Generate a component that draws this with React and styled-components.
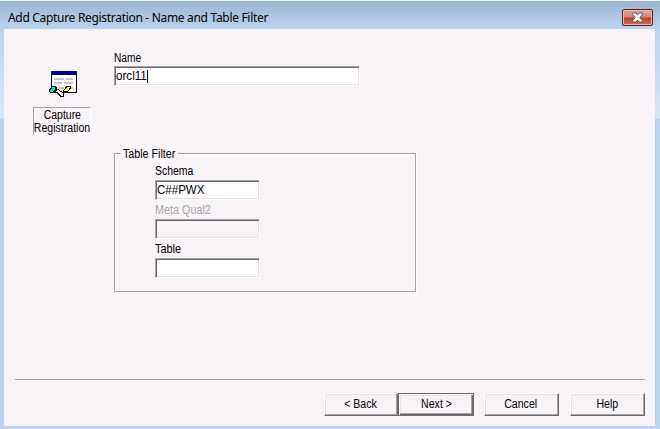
import React from "react";
import styled, { createGlobalStyle } from "styled-components";

const Global = createGlobalStyle`
  * { box-sizing: border-box; }
  body { margin: 0; overflow: hidden; }
`;

const Window = styled.div`
  width: 660px;
  height: 429px;
  display: flex;
  flex-direction: column;
  padding: 0 5px 3px 4px;
  border-top: 1px solid #f3f5f8;
  background:
    linear-gradient(#99b4d1, #bcd3ef 28px, #d9e6f5 117px, #bcd3ef 118px);
  font: 12px/13px "Liberation Sans", Arial, sans-serif;
  color: #000;
`;

const TitleBar = styled.header`
  height: 28px;
  flex: none;
  display: flex;
  justify-content: space-between;
  padding: 8px 2px 0 4px;
`;

const Title = styled.h1`
  margin: 1px 0 0;
  font: 12px/16px "Noto Sans", "Segoe UI", sans-serif;
  letter-spacing: -0.31px;
  white-space: nowrap;
`;

const CloseButton = styled.button`
  width: 31px;
  height: 17px;
  padding: 0;
  display: flex;
  align-items: center;
  justify-content: center;
  border: 1px solid #5a2424;
  border-radius: 2px;
  background: linear-gradient(#e3a79c, #d38476 48%, #bb3c24 52%, #d2705a);
  box-shadow: inset 0 0 0 1px #e9b5aa;
`;

const Client = styled.main`
  flex: 1;
  display: flex;
  flex-direction: column;
  background: #f7f3f7;
`;

const Content = styled.div`
  display: flex;
  height: 350px;
  padding-left: 29px;
`;

const Sidebar = styled.aside`
  width: 58px;
  padding-top: 41px;
  display: flex;
  flex-direction: column;
`;

const Caption = styled.div`
  width: 58px;
  height: 28px;
  margin-top: 10px;
  padding-top: 1px;
  white-space: nowrap;
  border: 1px solid;
  border-color: #a5a2a5 #fff #fff #a5a2a5;
  display: flex;
  flex-direction: column;
  align-items: center;
`;

const Form = styled.div`
  margin-left: 23px;
  padding-top: 23px;
  width: 302px;
`;

const Label = styled.label`
  display: block;
  height: 14px;
  flex: none;
  color: ${(p) => (p.$disabled ? "#a5a2a5" : "#000")};
  text-shadow: ${(p) => (p.$disabled ? "1px 1px #fff" : "none")};
`;

const Text = styled.span`
  display: inline-block;
  white-space: nowrap;
  transform: scaleX(${(p) => p.$scale || 0.88});
  transform-origin: ${(p) => (p.$centered ? "center" : "left")};
`;

const Field = styled.div`
  width: ${(p) => p.$width}px;
  height: 20px;
  flex: none;
  display: flex;
  align-items: center;
  padding-left: 1px;
  border: 1px solid;
  border-color: #a5a2a5 #fff #fff #a5a2a5;
  box-shadow: inset 1px 1px #6b696b, inset -1px -1px #e7e3e7;
  background: ${(p) => (p.$disabled ? "#f7f3f7" : "#fff")};
`;

const Caret = styled.span`
  width: 1px;
  height: 13px;
  margin-left: -1px;
  background: #000;
`;

const Group = styled.fieldset`
  width: 302px;
  height: 145px;
  margin: 61px 0 0;
  padding: 4px 0 0 40px;
  border: 1px solid #a5a2a5;
  box-shadow: 1px 1px #fff, inset 1px 1px #fff;
  min-width: 0;
`;

const Legend = styled.legend`
  width: 57px;
  height: 13px;
  margin-left: -34px;
  padding: 0 2px;
  line-height: 15px;
  white-space: nowrap;
`;

const FieldBlock = styled.div`
  height: 39px;
  display: flex;
  flex-direction: column;
  gap: 2px;

  label {
    line-height: 15px;
  }
`;

const Rule = styled.hr`
  width: 630px;
  height: 2px;
  margin: 0 0 0 11px;
  border: 0;
  border-top: 1px solid #a5a2a5;
  border-bottom: 1px solid #fff;
`;

const Actions = styled.footer`
  display: flex;
  margin: 12px 10px 0 0;
  justify-content: flex-end;
`;

const Button = styled.button`
  width: ${(p) => p.$width || 75}px;
  height: 23px;
  padding: 0 1px 1px 0;
  margin-left: ${(p) => p.$gap || 0}px;
  font: 12px/13px "Liberation Sans", Arial, sans-serif;
  color: #000;
  background: #f7f3f7;
  border: 1px solid;
  border-color: #fff #6b696b #6b696b #fff;
  box-shadow: inset -1px -1px #a5a2a5, inset 1px 1px #e7e3e7;
`;

const DefaultButton = styled(Button)`
  padding: 0 0 1px 1px;
  border-color: #6b696b;
  box-shadow: inset 1px 1px #fff, inset -1px -1px #6b696b, inset -2px -2px #a5a2a5, inset 2px 2px #e7e3e7;
`;

const IconSvg = styled.svg`
  margin-left: 16px;
  flex: none;
`;

const RegistrationIcon = () => (
  <IconSvg width="28" height="27" viewBox="0 0 28 27" shapeRendering="crispEdges">
    <path d="M2 1h26v22H2z" fill="#000" />
    <path d="M3 5h24v17H3z" fill="#fff" />
    <path d="M2 1h26v4H2z" fill="#000084" />
    <path d="M5 8h10v2H5zM17 8h7v2h-7zM5 12h8v2H5zM15 12h9v2h-9zM9 17h6v2H9zM21 17h3v2h-3z" fill="#c6c3c6" />
    <path d="M3 16h4v1h1v3H7v1H6v1H5v1H1v-1H0v-3h1v-1h1v-1h1z" fill="#000" />
    <path d="M3 17h3v3H5v1H4v1H1v-2h1v-1h1z" fill="#00e7e7" />
    <path d="M7 19h3v1h1v1h2v1h1v1h1v4h-4v-1h-1v-1H9v-1H8v-1H7v-1H6v-2h1z" fill="#000" />
    <path d="M8 20h2v1h1v1h2v1h1v3h-2v-1h-1v-1h-1v-1H9v-1H7v-1h1z" fill="#fff" />
    <path d="M17 16h5v3h-1v1h-1v1h-1v1h-5v-2h1v-1h1v-2h1z" fill="#000" />
    <path d="M18 17h3v1h-1v2h-1v1h-4v-1h1v-1h1v-1h1z" fill="#ff0" />
  </IconSvg>
);

const CloseIcon = () => (
  <svg width="13" height="11" viewBox="0 0 13 11">
    <path d="M1.5 1h3.5l1.5 2L8 1h3.5v1.5L8.8 5.5l2.7 3V10H8L6.5 8 5 10H1.5V8.5l2.7-3-2.7-3z" fill="#fff" stroke="#53576a" />
  </svg>
);

export default function App() {
  return (
    <>
      <Global />
      <Window>
        <TitleBar>
          <Title>Add Capture Registration - Name and Table Filter</Title>
          <CloseButton aria-label="Close"><CloseIcon /></CloseButton>
        </TitleBar>
        <Client>
          <Content>
            <Sidebar>
              <RegistrationIcon />
              <Caption>
                <Text $centered $scale={0.87}>Capture</Text>
                <Text $centered>Registration</Text>
              </Caption>
            </Sidebar>
            <Form>
              <Label><Text $scale={0.85}>Name</Text></Label>
              <Field $width={246}><Text $scale={0.97}>orcl11</Text><Caret /></Field>
              <Group>
                <Legend><Text $scale={0.89}>Table Filter</Text></Legend>
                <FieldBlock>
                  <Label><Text $scale={0.87}>Schema</Text></Label>
                  <Field $width={105}><Text $scale={0.96}>C##PWX</Text></Field>
                </FieldBlock>
                <FieldBlock>
                  <Label $disabled><Text $scale={0.9}>Meta Qual2</Text></Label>
                  <Field $width={105} $disabled />
                </FieldBlock>
                <FieldBlock>
                  <Label><Text $scale={0.91}>Table</Text></Label>
                  <Field $width={105} />
                </FieldBlock>
              </Group>
            </Form>
          </Content>
          <Rule />
          <Actions>
            <Button $width={74}><Text $centered>&lt; Back</Text></Button>
            <DefaultButton $width={76}><Text $centered>Next &gt;</Text></DefaultButton>
            <Button $gap={10}><Text $centered>Cancel</Text></Button>
            <Button $gap={11}><Text $centered>Help</Text></Button>
          </Actions>
        </Client>
      </Window>
    </>
  );
}
